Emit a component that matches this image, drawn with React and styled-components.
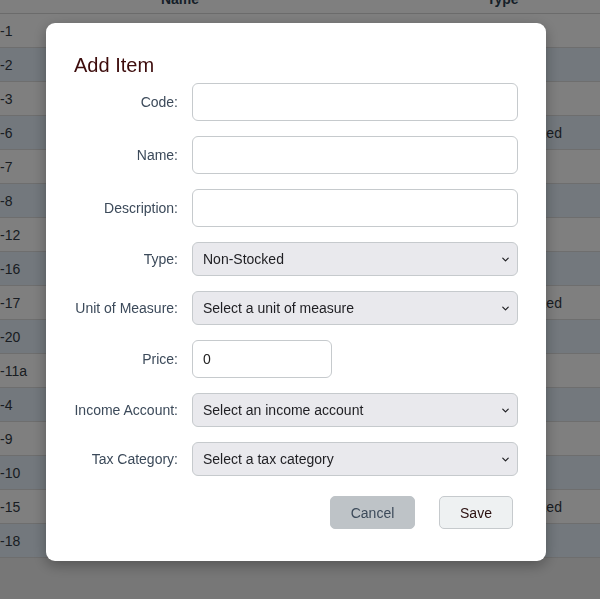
import React from 'react';
import styled, { createGlobalStyle } from 'styled-components';
import { ChevronDown } from 'lucide-react';

const items = [
  { code: '-1', name: 'Consulting', type: 'Service' },
  { code: '-2', name: 'Labour', type: 'Service' },
  { code: '-3', name: 'Freight', type: 'Service' },
  { code: '-6', name: 'Brackets', type: 'Non-Stocked' },
  { code: '-7', name: 'Support', type: 'Service' },
  { code: '-8', name: 'Widgets', type: 'Stocked' },
  { code: '-12', name: 'Hosting', type: 'Service' },
  { code: '-16', name: 'Cables', type: 'Stocked' },
  { code: '-17', name: 'Fittings', type: 'Non-Stocked' },
  { code: '-20', name: 'Training', type: 'Service' },
  { code: '-11a', name: 'Licences', type: 'Service' },
  { code: '-4', name: 'Panels', type: 'Stocked' },
  { code: '-9', name: 'Delivery', type: 'Service' },
  { code: '-10', name: 'Sensors', type: 'Stocked' },
  { code: '-15', name: 'Screws', type: 'Non-Stocked' },
  { code: '-18', name: 'Repairs', type: 'Service' },
];

export default function App() {
  return (
    <>
      <GlobalStyle />
      <Page>
        <Table>
          <HeadRow>
            <HeadCell />
            <HeadCell $align='center'>Name</HeadCell>
            <HeadCell />
            <HeadCell $pad={17}>Type</HeadCell>
          </HeadRow>
          {items.map((item, i) => (
            <Row key={i} $alt={i % 2 === 1}>
              <Cell>{item.code}</Cell>
              <Cell>{item.name}</Cell>
              <Cell />
              <Cell $pad={11}>{item.type}</Cell>
            </Row>
          ))}
        </Table>
      </Page>

      <Overlay>
        <Modal>
          <Title>Add Item</Title>
          <Form>
            <Label>Code:</Label>
            <TextInput type='text' />

            <Label>Name:</Label>
            <TextInput type='text' />

            <Label>Description:</Label>
            <TextInput type='text' />

            <Label>Type:</Label>
            <SelectWrap>
              <Select defaultValue='non'>
                <option value='non'>Non-Stocked</option>
                <option value='stk'>Stocked</option>
                <option value='svc'>Service</option>
              </Select>
              <Chevron><ChevronDown size={11} strokeWidth={2.6} /></Chevron>
            </SelectWrap>

            <Label>Unit of Measure:</Label>
            <SelectWrap>
              <Select defaultValue=''>
                <option value=''>Select a unit of measure</option>
              </Select>
              <Chevron><ChevronDown size={11} strokeWidth={2.6} /></Chevron>
            </SelectWrap>

            <Label>Price:</Label>
            <TextInput type='text' defaultValue='0' $width={140} />

            <Label>Income Account:</Label>
            <SelectWrap>
              <Select defaultValue=''>
                <option value=''>Select an income account</option>
              </Select>
              <Chevron><ChevronDown size={11} strokeWidth={2.6} /></Chevron>
            </SelectWrap>

            <Label>Tax Category:</Label>
            <SelectWrap>
              <Select defaultValue=''>
                <option value=''>Select a tax category</option>
              </Select>
              <Chevron><ChevronDown size={11} strokeWidth={2.6} /></Chevron>
            </SelectWrap>
          </Form>
          <Actions>
            <CancelButton>Cancel</CancelButton>
            <SaveButton>Save</SaveButton>
          </Actions>
        </Modal>
      </Overlay>
    </>
  );
}

const GlobalStyle = createGlobalStyle`
  html, body {
    margin: 0;
    padding: 0;
    background: #eeeeee;
    font-family: "Liberation Sans", Arial, sans-serif;
  }
  * {
    box-sizing: border-box;
  }
`

const Page = styled.div`
  width: 600px;
  height: 599px;
  overflow: hidden;
`

const Table = styled.div`
  display: flex;
  flex-direction: column;
`

// the header is scrolled mostly out of view: only the foot of its text shows
const HeadRow = styled.div`
  display: grid;
  grid-template-columns: 120px 120px 1fr 130px;
  grid-template-rows: 14px;
  height: 14px;
  overflow: hidden;
  align-items: start;
  background: #ffffff;
  border-bottom: 1px solid #d6d6d6;
`

const HeadCell = styled.div`
  margin-top: -8px;
  font-size: 14px;
  font-weight: bold;
  line-height: 14px;
  color: #2c3e50;
  text-align: ${p => p.$align || 'left'};
  padding-left: ${p => p.$pad || 0}px;
`

const Row = styled.div`
  display: grid;
  grid-template-columns: 120px 120px 1fr 130px;
  height: 34px;
  align-items: center;
  background: ${p => (p.$alt ? '#e6f1fa' : '#ffffff')};
  border-bottom: 1px solid #dcdcdc;
`

const Cell = styled.div`
  font-size: 14px;
  color: #333a44;
  white-space: nowrap;
  padding-left: ${p => p.$pad || 0}px;
`

const Overlay = styled.div`
  position: fixed;
  inset: 0;
  background: rgba(0, 0, 0, 0.5);
  display: flex;
  align-items: flex-start;
  padding: 23px 0 0 46px;
`

const Modal = styled.div`
  width: 500px;
  background: #ffffff;
  border-radius: 9px;
  padding: 30px 28px 32px;
  box-shadow: 0 4px 14px rgba(0, 0, 0, 0.3);
`

const Title = styled.h2`
  margin: 0 0 6px;
  font-size: 20px;
  font-weight: normal;
  line-height: 24px;
  color: #3d0c0c;
`

const Form = styled.div`
  display: grid;
  grid-template-columns: 104px 1fr;
  column-gap: 14px;
  row-gap: 15px;
  align-items: center;
`

const Label = styled.label`
  font-size: 14px;
  color: #3c4a5a;
  text-align: right;
  white-space: nowrap;
`

const TextInput = styled.input`
  width: ${p => (p.$width ? `${p.$width}px` : '100%')};
  height: 38px;
  padding: 0 10px;
  border: 1px solid #c6cacd;
  border-radius: 6px;
  background: #ffffff;
  font-family: inherit;
  font-size: 14px;
  color: #222222;
  outline: none;
`

const SelectWrap = styled.div`
  position: relative;
  height: 34px;
`

const Select = styled.select`
  appearance: none;
  width: 100%;
  height: 34px;
  padding: 0 28px 0 10px;
  border: 1px solid #c6cacd;
  border-radius: 6px;
  background: #e9e9ed;
  font-family: inherit;
  font-size: 14px;
  color: #1e1e22;
  outline: none;
`

const Chevron = styled.span`
  position: absolute;
  right: 7px;
  top: 12px;
  display: flex;
  color: #1e1e22;
  pointer-events: none;
`

const Actions = styled.div`
  display: flex;
  justify-content: flex-end;
  gap: 24px;
  margin-top: 20px;
  padding-right: 5px;
`

const CancelButton = styled.button`
  width: 85px;
  height: 33px;
  padding: 0;
  border: 1px solid #bec3c7;
  border-radius: 5px;
  background: #bec3c7;
  font-family: inherit;
  font-size: 14px;
  color: #3c4a5a;
`

const SaveButton = styled.button`
  width: 74px;
  height: 33px;
  padding: 0;
  border: 1px solid #c6cacd;
  border-radius: 5px;
  background: #eef1f2;
  font-family: inherit;
  font-size: 14px;
  color: #2b1010;
`
